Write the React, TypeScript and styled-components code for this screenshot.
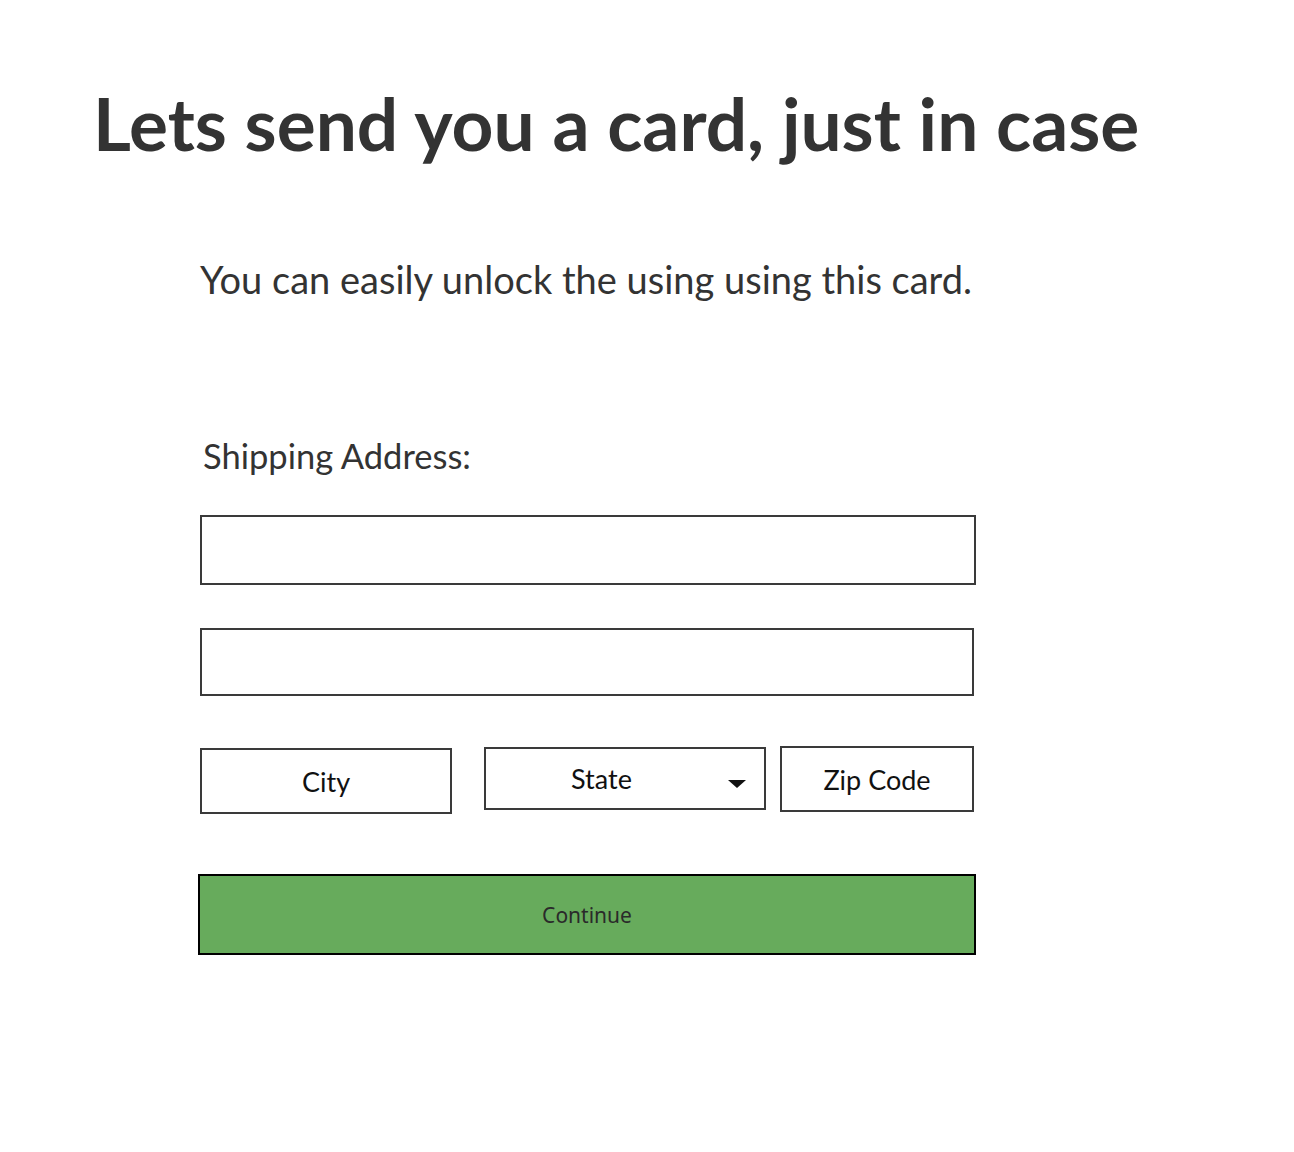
import styled, { createGlobalStyle } from "styled-components";

const GlobalStyle = createGlobalStyle`
  html, body {
    margin: 0;
    padding: 0;
    background: #ffffff;
  }
  body {
    font-family: Lato, "Noto Sans", sans-serif;
    color: #333333;
  }
`;

const Page = styled.div`
  width: 1294px;
  min-height: 1152px;
  box-sizing: border-box;
  padding: 79px 0 0 93px;
`;

const Title = styled.h1`
  margin: 0;
  font-family: Lato, sans-serif;
  font-weight: 700;
  font-size: 73px;
  line-height: 88px;
  letter-spacing: 0;
  color: #333333;
`;

const Content = styled.div`
  width: 776px;
  margin: 88px 0 0 107px;
  display: flex;
  flex-direction: column;
`;

const Lead = styled.p`
  margin: 0;
  font-family: Lato, sans-serif;
  font-size: 38px;
  line-height: 48px;
  color: #333333;
`;

const Label = styled.div`
  margin: 131px 0 0 3px;
  font-family: Lato, sans-serif;
  font-size: 34.5px;
  line-height: 44px;
  color: #333333;
`;

const TextBox = styled.div<{ $w: number; $h: number }>`
  box-sizing: border-box;
  width: ${(p) => p.$w}px;
  height: ${(p) => p.$h}px;
  border: 2px solid #3a3a3a;
  background: #ffffff;
`;

const FieldStack = styled.div`
  display: flex;
  flex-direction: column;
  gap: 43px;
  margin-top: 37px;
`;

const FieldRow = styled.div`
  display: flex;
  align-items: flex-start;
  margin-top: 51px;
`;

const Field = styled.div<{ $w: number; $h: number; $top: number; $gap: number; $shift?: number }>`
  box-sizing: border-box;
  position: relative;
  width: ${(p) => p.$w}px;
  height: ${(p) => p.$h}px;
  margin-top: ${(p) => p.$top}px;
  margin-left: ${(p) => p.$gap}px;
  padding-right: ${(p) => p.$shift ?? 0}px;
  border: 2px solid #3a3a3a;
  display: flex;
  align-items: center;
  justify-content: center;
  font-family: Lato, sans-serif;
  font-size: 27px;
  color: #111111;
`;

const Caret = styled.svg`
  position: absolute;
  right: 18px;
  top: 31px;
`;

const ContinueButton = styled.button`
  box-sizing: border-box;
  margin: 60px 0 0 -2px;
  width: 778px;
  height: 81px;
  background: #67ab5c;
  border: 2px solid #000000;
  font-family: "Noto Sans", sans-serif;
  font-size: 21px;
  color: #2a2a2a;
  cursor: pointer;
`;

export default function App() {
  return (
    <>
      <GlobalStyle />
      <Page>
        <Title>Lets send you a card, just in case</Title>
        <Content>
          <Lead>You can easily unlock the using using this card.</Lead>
          <Label>Shipping Address:</Label>
          <FieldStack>
            <TextBox $w={776} $h={70} />
            <TextBox $w={774} $h={68} />
          </FieldStack>
          <FieldRow>
            <Field $w={252} $h={66} $top={1} $gap={0}>City</Field>
            <Field $w={282} $h={63} $top={0} $gap={32} $shift={47}>
              State
              <Caret width="18" height="8" viewBox="0 0 18 8">
                <polygon points="0,0 18,0 9,8" fill="#111" />
              </Caret>
            </Field>
            <Field $w={194} $h={66} $top={-1} $gap={14}>Zip Code</Field>
          </FieldRow>
          <ContinueButton>Continue</ContinueButton>
        </Content>
      </Page>
    </>
  );
}
